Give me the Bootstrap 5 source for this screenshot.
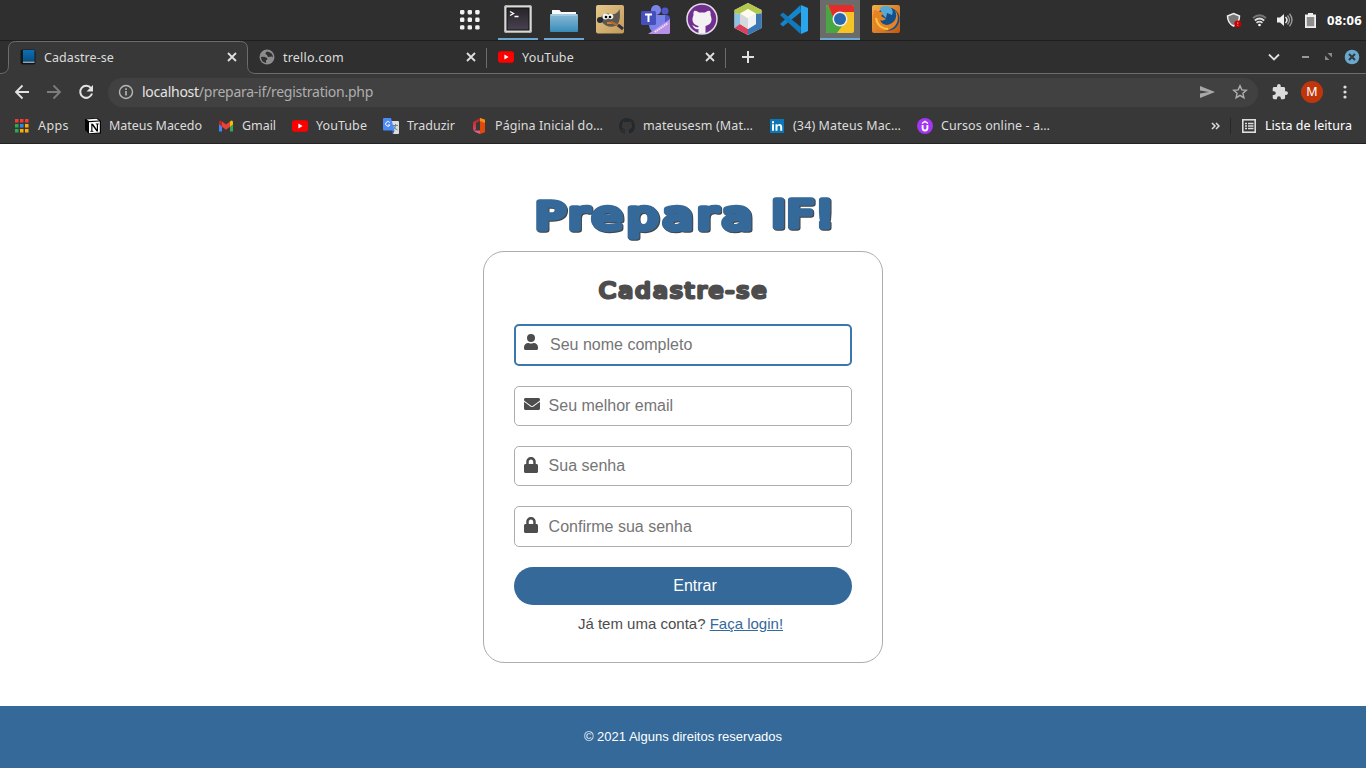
<!DOCTYPE html>
<html lang="pt-br">
<head>
<meta charset="utf-8">
<meta name="viewport" content="width=device-width, initial-scale=1">
<title>Cadastre-se</title>
<link href="https://cdn.jsdelivr.net/npm/bootstrap@5.3.0/dist/css/bootstrap.min.css" rel="stylesheet">
<style>
body{height:768px;overflow:hidden;font-family:"Liberation Sans",Arial,sans-serif;background:#fff}
svg{display:block;flex:none}
.chrome{font-family:"Noto Sans","Open Sans",sans-serif;font-size:12.5px;line-height:16px;color:#dcdcdc;white-space:nowrap}
.sysbar{height:41px;background:#2f2f2f;border-bottom:1px solid #1e1e1e}
.dock{gap:6px;margin-left:450px;height:40px}
.dock-item{width:40px;height:40px;display:flex;align-items:center;justify-content:center;padding-bottom:2px}
.dock-item.running{border-bottom:2px solid #6ba9d3;padding-bottom:0}
.dock-item.current{background:#6b6b6b}
.dock-apps{margin-right:2px;padding-bottom:0}
.clock{font-size:13px;font-weight:700;color:#fff}
.strip{height:33px;background:#2f2f2f;position:relative}
.strip-line{position:absolute;left:0;top:0}
.tab-item{width:239px;height:33px;padding:0 10px 1px 12px;position:relative}
.tab-item span{padding-top:1px}
.tab-sep{width:1px;height:20px;background:#6c6c6c;position:relative}
.tools{height:36px;background:#383838}
.omni{width:1150px;height:29px;margin-left:14px;border-radius:15px;background:#414141;padding:0 10px;font-size:14px;color:#aeaeae}
.omni b{font-weight:400;color:#e4e4e4}
.bookmarks{height:34px;background:#383838;border-bottom:1px solid #222;padding:0 14px 2px;gap:16px}
.bk{display:flex;align-items:center;gap:8px}
.avatar{width:22px;height:22px;border-radius:50%;background:#bf360c;color:#fff;font-size:12.5px;line-height:22px;text-align:center}
.page{height:562px;padding-top:45px}
.brand-title{margin:0;height:62px}
.brand-title svg{font-family:"DejaVu Sans",sans-serif;font-size:37px;fill:#346999;stroke:#346999;stroke-width:5.4px;stroke-linejoin:round;stroke-linecap:round;filter:drop-shadow(1px 1px .6px #444)}
.signup{width:400px;height:412px;border:1px solid #adadad;border-radius:21px;padding:22px 30px 0}
.signup-title{margin:0 0 16px;height:34px}
.signup-title svg{font-family:"DejaVu Sans",sans-serif;font-size:21px;fill:#4d4d4d;stroke:#4d4d4d;stroke-width:3px;stroke-linejoin:round;stroke-linecap:round}
.field{height:40px;border:1px solid #adadad;border-radius:5px;margin-bottom:20px;padding:0 9px;color:#4d4d4d}
.field.active{height:42px;border:2px solid #3b77ad;padding:0 8px}
.field.tall{height:41px}
.field .glyph{width:17px;margin-right:7.6px;margin-top:-5px}
.field .glyph-lock{margin-top:-3px}
.field.active .glyph{margin-right:9px;margin-top:-7px}
.field input{border:0;outline:0;padding:0;margin:0;width:280px;height:36px;background:none;font-size:16px;line-height:18px}
.field input::placeholder{color:#757575;opacity:1}
.btn-enter,.btn-enter:hover{height:38px;border:0;border-radius:19px;background:#346999;color:#fff;font-size:16px;line-height:18px;padding:0 0 0 24px}
.login-line{font-size:15px;line-height:18px;margin:10px 5px 0 0;color:#4d4d4d}
.login-line a{color:#346999}
.foot{height:62px;background:#346999;color:#fff;font-size:13px;line-height:15px;padding-bottom:2px}
</style>
</head>
<body>
<svg width="0" height="0" class="position-absolute">
<defs>
<symbol id="x" viewBox="0 0 10 10"><path d="M1 1l8 8M9 1l-8 8" stroke="#e0e0e0" stroke-width="1.8"/></symbol>
<symbol id="yt" viewBox="0 0 16 16"><rect y="2.3" width="16" height="11.4" rx="2.8" fill="#f00"/><path d="M6.4 5.6v4.8l4.2-2.4z" fill="#fff"/></symbol>
<symbol id="octo" viewBox="0 0 16 16"><path d="M8 0C3.58 0 0 3.58 0 8c0 3.54 2.29 6.53 5.47 7.59.4.07.55-.17.55-.38 0-.19-.01-.82-.01-1.49-2.01.37-2.53-.49-2.69-.94-.09-.23-.48-.94-.82-1.13-.28-.15-.68-.52-.01-.53.63-.01 1.08.58 1.23.82.72 1.21 1.87.87 2.33.66.07-.52.28-.87.51-1.07-1.78-.2-3.64-.89-3.64-3.95 0-.87.31-1.59.82-2.15-.08-.2-.36-1.02.08-2.12 0 0 .67-.21 2.2.82a7.6 7.6 0 0 1 4 0c1.53-1.04 2.2-.82 2.2-.82.44 1.1.16 1.92.08 2.12.51.56.82 1.27.82 2.15 0 3.07-1.87 3.75-3.65 3.95.29.25.54.73.54 1.48 0 1.07-.01 1.93-.01 2.2 0 .21.15.46.55.38A8 8 0 0 0 16 8c0-4.42-3.58-8-8-8z"/></symbol>
<symbol id="lock" viewBox="0 0 448 512"><path fill="#4d4d4d" d="M400 224h-24v-72C376 68.200 307.800 0 224 0S72 68.200 72 152v72H48c-26.500 0-48 21.500-48 48v192c0 26.500 21.500 48 48 48h352c26.500 0 48-21.500 48-48V272c0-26.500-21.500-48-48-48zm-104 0H152v-72c0-39.700 32.300-72 72-72s72 32.300 72 72v72z"/></symbol>
<linearGradient id="gf" x2="0" y2="1"><stop stop-color="#8dbbd6"/><stop offset="1" stop-color="#378bb8"/></linearGradient>
<linearGradient id="gt" x2="0" y2="1"><stop stop-color="#26242a"/><stop offset="1" stop-color="#4a4150"/></linearGradient>
<linearGradient id="gw" x2="1" y2="1"><stop stop-color="#e6c88c"/><stop offset="1" stop-color="#c39a5a"/></linearGradient>
<linearGradient id="go" x2="1" y2="1"><stop stop-color="#f5b04a"/><stop offset="1" stop-color="#c4570f"/></linearGradient>
<linearGradient id="gb" x2="0" y2="1"><stop stop-color="#0b71b8"/><stop offset="1" stop-color="#0a4f82"/></linearGradient>
<linearGradient id="gof" x2="0" y2="1"><stop stop-color="#b3201a"/><stop offset="1" stop-color="#e04a6a"/></linearGradient>
</defs></svg>

<header class="chrome">
<div class="sysbar d-flex align-items-center">
 <div class="dock d-flex">
  <div class="dock-item dock-apps"><svg width="20" height="20" fill="#f3f3f3"><g id="dots"><rect width="4.400" height="4.400" rx="1.300"/><rect x="7.600" width="4.400" height="4.400" rx="1.300"/><rect x="15.200" width="4.400" height="4.400" rx="1.300"/></g><use href="#dots" y="7.600"/><use href="#dots" y="15.200"/></svg></div>
  <div class="dock-item running"><svg width="28" height="28"><rect width="28" height="28" rx="2.500" fill="#d9d9d6"/><rect x=".5" y=".5" width="27" height="27" rx="2" fill="none" stroke="#a9a9a6"/><rect x="3" y="3" width="22" height="22" fill="url(#gt)" stroke="#111"/><path d="M6 6.500l3.500 2-3.500 2M10.500 11.500h4" stroke="#fff" stroke-width="1.400" fill="none"/></svg></div>
  <div class="dock-item running"><svg width="28" height="24" class="mt-1"><path d="M2 1h7.500l1.500 2h15v8H2z" fill="#fafafa"/><rect x="0" y="5" width="28" height="18" rx="1" fill="url(#gf)"/><path d="M1 6h26" stroke="#b9d9ea"/></svg></div>
  <div class="dock-item"><svg width="28" height="29"><rect width="28" height="28.500" rx="2" fill="url(#gw)"/><path d="M5 12c3-4 6-4 9-3 5 1 8-1 9.500-5 1 7 .5 13-2.500 16-4 3-12 2-15-3z" fill="#5c5850"/><circle cx="9.500" cy="11.500" r="3" fill="#f4f4f4"/><circle cx="14.500" cy="11.500" r="2.800" fill="#f4f4f4"/><circle cx="10" cy="12" r="1.300"/><circle cx="14" cy="12" r="1.300"/><circle cx="4" cy="15" r="3" fill="#222b36"/><path d="M11 18h5" stroke="#d78436" stroke-width="1.800"/><path d="M15 17l8 4" stroke="#b8692b" stroke-width="2"/><path d="M22 20l5 4" stroke="#334" stroke-width="3"/></svg></div>
  <div class="dock-item"><svg width="32" height="30"><circle cx="16" cy="6" r="5" fill="#7b83eb"/><circle cx="25" cy="7" r="3.500" fill="#5059c9"/><rect x="19" y="11" width="11" height="14" rx="4" fill="#5059c9"/><path d="M9 11h16v10a8 8 0 0 1-16 0z" fill="#7b83eb"/><rect x="1" y="7" width="15" height="14" rx="1.500" fill="#4650bd"/><path d="M5 10.500h7M8.500 10.500v7.500" stroke="#fff" stroke-width="2"/><path d="M8 30L30 15v14l-1 1z" fill="#b890e6"/><path d="M15 28l13-9" stroke="#efe3fb" stroke-width="2" stroke-dasharray="1.500 .7"/></svg></div>
  <div class="dock-item"><svg width="32" height="32" viewBox="0 0 32 32"><circle cx="16" cy="16" r="15" fill="#71308f" stroke="#e5dcea" stroke-width="1.500"/><path d="M8 8q2-1 5 1.500h6Q22 7 24 8q1 2 .5 4c3 7-1 10-5 11v7q-3.500 1-7 0v-4c-4 1-4.500-2-6.500-3.500 3-.5 3 2.500 6.500 1.500v-1c-4-1-8-4-5-11Q7 10 8 8z" fill="#f3f1f4"/></svg></div>
  <div class="dock-item"><svg width="28" height="32"><path d="M14 0l13.500 7v18L14 32 .5 25V7z" fill="#e0e5e8"/><path d="M14 0l13.500 7v3.500L22 11l-8-5-8 5-5.500-.5V7z" fill="#b4c94b"/><path d="M.5 10.500L6 11v10L.5 25z" fill="#8cc3e4"/><path d="M.5 25L6 21l8 5v6z" fill="#d8415c"/><path d="M27.500 10.500L22 11v10l-8 5v6l13.500-7z" fill="#3978b5"/><path d="M14 6l8 4.500-8 5-8-5z" fill="#fbfbf0"/><path d="M6 10.500l8 5V26l-8-5z" fill="#d6d9dc"/><path d="M22 10.500l-8 5V26l8-5z" fill="#f1f2f3"/></svg></div>
  <div class="dock-item"><svg width="28" height="29"><path d="M21 7L3 21.500 0 19 20.500 0z" fill="#1287cc"/><path d="M21 22L3 7.500 0 10l20.500 19z" fill="#1279bb"/><path d="M21 0l7 3v23l-7 3z" fill="#2aa6ee"/></svg></div>
  <div class="dock-item running current"><svg width="28" height="28"><clipPath id="cr"><rect width="28" height="28" rx="2"/></clipPath><g clip-path="url(#cr)"><path d="M0 0h28v28H0z" fill="#f5c323"/><path d="M0 0v28h11l8-11-10-2L2 0z" fill="#4aa642"/><path d="M2 0h26v7H14l-6 7z" fill="#e22d29"/></g><circle cx="14" cy="14" r="7.500" fill="#eee"/><circle cx="14" cy="14" r="6" fill="#2967ae"/></svg></div>
  <div class="dock-item"><svg width="28" height="28"><rect width="28" height="28" rx="2" fill="url(#go)"/><circle cx="16" cy="14" r="11.500" fill="#134f8a"/><path d="M8 3c7-5 15 0 12 7l-5-2-1 5-4-4z" fill="#55a9d4"/><path d="M2 5c2 0 4 2 8 2 2 2 0 3-1 4l5 3c-3 2-4 2-6 1 3 7 11 6 15 0 2-4 1-7 0-10 4 5 4 12-1 17-7 6-18 4-21-4-1-5 0-8 1-13z" fill="#e98322"/><path d="M4 13c1 7 6 11 12 11" stroke="#f8c443" stroke-width="2" fill="none"/></svg></div>
 </div>
 <svg class="ms-auto" width="16" height="17" viewBox="0 0 16 17" style="margin-right:10px"><path d="M7.500 1.500l6 2.500c0 5-2 8-6 10-4-2-6-5-6-10z" fill="#777" stroke="#eee" stroke-width="1.500"/><circle cx="11.800" cy="12" r="3.500" fill="#c40000"/><path d="M11.800 10v2.300M11.800 13v1" stroke="#f77"/></svg>
 <svg width="15" height="14" fill="none" stroke-width="1.700" style="margin-right:10px"><path d="M1 5q6.500-5.500 13 0" stroke="#777"/><path d="M2.800 7.500q4.700-4 9.400 0M4.500 9.800q3-2.500 6 0" stroke="#ddd"/><circle cx="7.500" cy="12" r="1.300" fill="#fff"/></svg>
 <svg width="16" height="15" fill="none" style="margin-right:12px"><path d="M0 4.500h3l4-3.500v12L3 9.500H0z" fill="#eee"/><path d="M8.500 4q3 3 0 6" stroke="#eee" stroke-width="1.500"/><path d="M10.500 2.500q4 4.500 0 9M12.500.7q5 6.300 0 12.600" stroke="#999" stroke-width="1.400"/></svg>
 <svg width="11" height="15" style="margin-right:11px"><path d="M3 0h5v1.500h3V15H0V1.500h3z" fill="#eee"/><path d="M1.800 4h7.400v9.200H1.800z" fill="#8d8d8d"/></svg>
 <span class="clock" data-w="35" style="margin-right:4px">08:06</span>
</div>

<div class="strip d-flex align-items-center">
 <svg class="strip-line" width="1366" height="33"><path d="M0 32.500c5 0 8.500-2 8.500-8V8q0-7.500 7-7.500h225q7 0 7 7.500v16.500c0 6 3.500 8 8.500 8V33H0z" fill="#383838"/><path d="M0 32.500c5 0 8.500-2 8.500-8V8q0-7.500 7-7.500h225q7 0 7 7.500v16.500c0 6 3.500 8 8.500 8H1366" fill="none" stroke="#6d6d6d"/></svg>
 <div class="tab-item d-flex align-items-center" style="margin-left:8px"><svg width="16" height="16" class="me-2"><rect x=".5" y=".5" width="15" height="15" rx="2" fill="#12161a"/><rect x="3" y="1" width="11.500" height="11.500" fill="url(#gb)"/><path d="M3 12.500h11.500v1.500H3z" fill="#8ea5b4"/></svg><span data-w="70">Cadastre-se</span><svg class="ms-auto" width="10" height="10"><use href="#x"/></svg></div>
 <div class="tab-item d-flex align-items-center"><svg width="16" height="16" class="me-2"><circle cx="8" cy="8" r="7.500" fill="#8c8c8c"/><path d="M2 8q3-1 6 1 1 2-1 2v3q-5-1-5-6M8 2.500q-3 2 0 3.500l1 2 4-.5 1 1q0-5-6-6z" fill="#303030"/></svg><span data-w="61">trello.com</span><svg class="ms-auto" width="10" height="10"><use href="#x"/></svg></div>
 <div class="tab-sep"></div>
 <div class="tab-item d-flex align-items-center" style="width:238px;padding-left:11px"><svg width="16" height="16" class="me-2"><use href="#yt"/></svg><span data-w="52">YouTube</span><svg class="ms-auto" width="10" height="10"><use href="#x"/></svg></div>
 <div class="tab-sep"></div>
 <svg width="12" height="12" class="position-relative" style="margin:-1px 0 0 16px"><path d="M6 0v12M0 6h12" stroke="#e0e0e0" stroke-width="2"/></svg>
 <svg width="12" height="8" class="position-relative ms-auto" style="margin:-1px 22px 0 0"><path d="M1 1.500l5 5 5-5" fill="none" stroke="#e0e0e0" stroke-width="1.800"/></svg>
 <svg width="7" height="2" class="position-relative" style="margin:-2px 16px 0 0"><path d="M0 1h7" stroke="#999" stroke-width="2"/></svg>
 <svg width="7" height="7" class="position-relative" style="margin:-2px 12px 0 0" fill="#8a8a8a"><path d="M2.500 0H7v4.500zM0 2.500V7h4.500z"/></svg>
 <svg width="16" height="16" class="position-relative" style="margin:-2px 6px 0 0"><circle cx="8" cy="8" r="7.300" fill="#6aa9ce"/><path d="M5 5l6 6M11 5l-6 6" stroke="#2f3940" stroke-width="2"/></svg>
</div>

<div class="tools d-flex align-items-center">
 <svg width="16" height="16" fill="none" stroke="#e2e2e2" stroke-width="1.800" style="margin-left:14px"><path d="M15 8H2M8.500 1.500L2 8l6.500 6.500"/></svg>
 <svg width="16" height="16" fill="none" stroke="#7d7d7d" stroke-width="1.800" style="margin-left:16px"><path d="M1 8h13M7.500 1.500L14 8l-6.500 6.500"/></svg>
 <svg width="16" height="16" fill="none" stroke="#e2e2e2" stroke-width="2" style="margin-left:16px"><path d="M13 4.200A6 6 0 1 0 14 9.500"/><path d="M15 1v6.500H8.500z" fill="#e2e2e2" stroke="none"/></svg>
 <div class="omni d-flex align-items-center"><svg width="16" height="16" fill="none" stroke="#b8b8b8" stroke-width="1.400"><circle cx="8" cy="8" r="6.500"/><path d="M8 7v4.500M8 4.300V6" stroke-width="1.600"/></svg><span data-w="231" style="margin-left:8px"><b>localhost</b>/prepara-if/registration.php</span>
 <svg width="15" height="14" class="ms-auto"><path d="M0 1l15 6-15 6V8.500L9 7 0 5.500z" fill="#a8a8a8"/></svg>
 <svg width="16" height="16" style="margin-left:17px"><path d="M8 1.800l1.800 4.100 4.500.4-3.400 3 1 4.400L8 11.300l-3.900 2.400 1-4.400-3.400-3 4.500-.4z" fill="none" stroke="#b0b0b0" stroke-width="1.400"/></svg></div>
 <svg width="16" height="16" viewBox="1 1 22 22" style="margin-left:14px"><path fill="#dcdcdc" d="M20.500 11H19V7c0-1.100-.9-2-2-2h-4V3.500a2.500 2.500 0 0 0-5 0V5H4c-1.100 0-2 .9-2 2v3.800h1.500a2.700 2.700 0 0 1 0 5.400H2V20c0 1.100.9 2 2 2h3.800v-1.500a2.700 2.700 0 0 1 5.400 0V22H17c1.100 0 2-.9 2-2v-4h1.500a2.500 2.500 0 0 0 0-5z"/></svg>
 <span class="avatar" style="margin-left:13px">M</span>
 <svg width="4" height="14" fill="#dedede" style="margin-left:20px"><circle cx="2" cy="2" r="1.600"/><circle cx="2" cy="7" r="1.600"/><circle cx="2" cy="12" r="1.600"/></svg>
</div>

<div class="bookmarks d-flex align-items-center">
 <div class="bk"><svg width="16" height="16"><path d="M1 1h3.500v3.500H1zM6 1h3.500v3.500H6zM11 1h3.500v3.500H11z" fill="#f33b30"/><path d="M1 6h3.500v3.500H1zM1 11h3.500v3.500H1z" fill="#2da94f"/><path d="M6 6h3.500v3.500H6z" fill="#2f87f5"/><path d="M11 6h3.500v3.500H11zM11 11h3.500v3.500H11zM6 11h3.500v3.500H6z" fill="#fbad06"/></svg><span data-w="31">Apps</span></div>
 <div class="bk"><svg width="16" height="16"><path d="M0 1l12-1 4 3v12.500l-12 .5-4-4z" fill="#050505"/><path d="M1.500 1.500l10-.7 2.500 1.700-10 .6z" fill="#fff"/><path d="M4 4.300l10.800-.7v11L4 15.200z" fill="#fff"/><path d="M5.500 5.800H8l3.800 5.400V6.500l-1-.3v-.8h3v.8l-.8.3v7h-1.400L7.400 7.800v4.900l1 .3v.8h-3V13l.9-.3V6.500z" fill="#000"/></svg><span data-w="93">Mateus Macedo</span></div>
 <div class="bk"><svg width="16" height="16"><path d="M1 4.500v9h3V7z" fill="#4285f4"/><path d="M15 4.500v9h-3V7z" fill="#34a853"/><path d="M12 3.500l1-.8q2-.5 2 1.500v2l-3 2.500z" fill="#fbbc04"/><path d="M4 3.500V8.700l4 3 4-3V3.500l-4 3z" fill="#ea4335"/><path d="M4 3.500l-1-.8q-2-.5-2 1.500v2l3 2.500z" fill="#c5221f"/></svg><span data-w="34">Gmail</span></div>
 <div class="bk"><svg width="16" height="16"><use href="#yt"/></svg><span data-w="51">YouTube</span></div>
 <div class="bk"><svg width="16" height="16"><path d="M7 3h8q1 0 1 1v11q0 1-1 1h-5z" fill="#ddd"/><path d="M10 7.500h5M12.500 6v1.500q0 3-3 4.500M10.500 8q1 3 4 4" stroke="#6b7f8c" fill="none"/><path d="M1 0h7l3.500 12.500H1q-1 0-1-1V1q0-1 1-1z" fill="#4c8bf5"/><path d="M6.800 4.500A2.300 2.300 0 1 0 7 7H5" stroke="#fff" fill="none"/><path d="M8 12.500h3.500L10 16z" fill="#2457b5"/></svg><span data-w="48">Traduzir</span></div>
 <div class="bk"><svg width="16" height="16"><path d="M2 4l7-4v3L5 5v6l-2 2q-1-1-1-3z" fill="url(#gof)"/><path d="M3 12.500h6V16L4 14z" fill="#e85c84"/><path d="M9 0l5 1.700v12.600L9 16z" fill="#e2480c"/><path d="M9 0l5 1.700V5L9 3z" fill="#f09117"/></svg><span data-w="108">Página Inicial do…</span></div>
 <div class="bk"><svg width="16" height="16" fill="#24292e"><use href="#octo"/></svg><span data-w="110">mateusesm (Mat…</span></div>
 <div class="bk"><svg width="16" height="16"><path d="M1 1h14v14H1z" fill="#0a77b7"/><path d="M3 6.200h2v6.500H3zM3 3.200h2v2H3zM6.500 6.200h2v1c1.500-2 4.700-1.500 4.700 1.800v3.700h-2V9.200c0-2-2.700-2-2.700 0v3.500h-2z" fill="#fff"/></svg><span data-w="108">(34) Mateus Mac…</span></div>
 <div class="bk"><svg width="16" height="16" fill="none" stroke="#fff"><circle cx="8" cy="8" r="8" fill="#a435f0" stroke="none"/><path d="M5.600 7v3q0 2.500 2.400 2.500t2.400-2.500V7" stroke-width="1.900"/><path d="M5 5.500l3-2 3 2" stroke-width="1.500"/></svg><span data-w="109">Cursos online - a…</span></div>
 <svg class="ms-auto" width="9" height="8" fill="none" stroke="#ddd" stroke-width="1.500" style="margin-right:-6px"><path d="M1 1l3 3-3 3M5 1l3 3-3 3"/></svg>
 <div style="width:1px;height:16px;background:#272727"></div>
 <div class="bk" style="margin-left:-6px"><svg width="16" height="16" fill="none" stroke="#ddd"><rect x="1.800" y="1.800" width="12.400" height="12.400" stroke-width="1.600"/><path d="M4 5.500h2M7 5.500h5.500M4 8h2M7 8h5.500M4 10.500h2M7 10.500h5.500" stroke-width="1.300"/></svg><span data-w="87" style="color:#fff">Lista de leitura</span></div>
</div>
</header>

<main class="page d-flex flex-column align-items-center">
 <h1 class="brand-title"><svg width="320" height="62"><text transform="translate(12 39) scale(1.35 1)" textLength="161" y="0.500">Prepara</text><text transform="translate(248.500 39) scale(1.280 1)" textLength="49" y="-1">IF!</text></svg></h1>
 <form class="signup" onsubmit="return false">
  <h2 class="signup-title"><svg width="338" height="34"><text transform="translate(85 24) scale(1.150 1)" textLength="145.500">Cadastre-se</text></svg></h2>
  <div class="field active d-flex align-items-center"><span class="glyph"><svg width="14" height="16" viewBox="0 0 448 512"><path fill="#4d4d4d" d="M224 256a128 128 0 1 0 0-256 128 128 0 0 0 0 256zm90 32h-17a174 174 0 0 1-146 0h-17C60 288 0 348 0 422v42c0 27 21 48 48 48h352c27 0 48-21 48-48v-42c0-74-60-134-134-134z"/></svg></span><input type="text" placeholder="Seu nome completo"></div>
  <div class="field d-flex align-items-center"><span class="glyph"><svg width="16" height="16" viewBox="0 0 512 512"><path fill="#4d4d4d" d="M502.300 190.800c3.900-3.100 9.700-.2 9.700 4.700V400c0 26.500-21.500 48-48 48H48c-26.500 0-48-21.500-48-48V195.600c0-5 5.700-7.800 9.700-4.700 22.400 17.400 52.100 39.500 154.100 113.600 21.100 15.400 56.700 47.800 92.200 47.600 35.700.3 72-32.800 92.300-47.600 102-74.100 131.600-96.300 154-113.700zM256 320c23.200.4 56.600-29.200 73.400-41.400 132.700-96.300 142.800-104.700 173.400-128.700 5.800-4.500 9.200-11.500 9.200-18.900v-19c0-26.500-21.500-48-48-48H48c-26.500 0-48 21.500-48 48v19c0 7.400 3.400 14.300 9.200 18.900 30.600 23.900 40.700 32.400 173.400 128.700 16.800 12.200 50.200 41.800 73.400 41.400z"/></svg></span><input type="email" placeholder="Seu melhor email"></div>
  <div class="field d-flex align-items-center"><span class="glyph glyph-lock"><svg width="14" height="16"><use href="#lock"/></svg></span><input type="password" placeholder="Sua senha"></div>
  <div class="field tall d-flex align-items-center"><span class="glyph glyph-lock"><svg width="14" height="16"><use href="#lock"/></svg></span><input type="password" placeholder="Confirme sua senha"></div>
  <button class="btn btn-enter w-100" type="submit">Entrar</button>
  <p class="login-line text-center">Já tem uma conta? <a href="#">Faça login!</a></p>
 </form>
</main>
<footer class="foot d-flex align-items-center justify-content-center">© 2021 Alguns direitos reservados</footer>

<script src="https://cdn.jsdelivr.net/npm/bootstrap@5.3.0/dist/js/bootstrap.bundle.min.js"></script>
<script>
// Track each label so it fills its allotted width
document.querySelectorAll('[data-w]').forEach(function (el) {
  el.style.display = 'inline-block';
  var w = +el.dataset.w, n = el.textContent.length;
  el.style.letterSpacing = (w - el.getBoundingClientRect().width) / n + 'px';
});
</script>
</body>
</html>
